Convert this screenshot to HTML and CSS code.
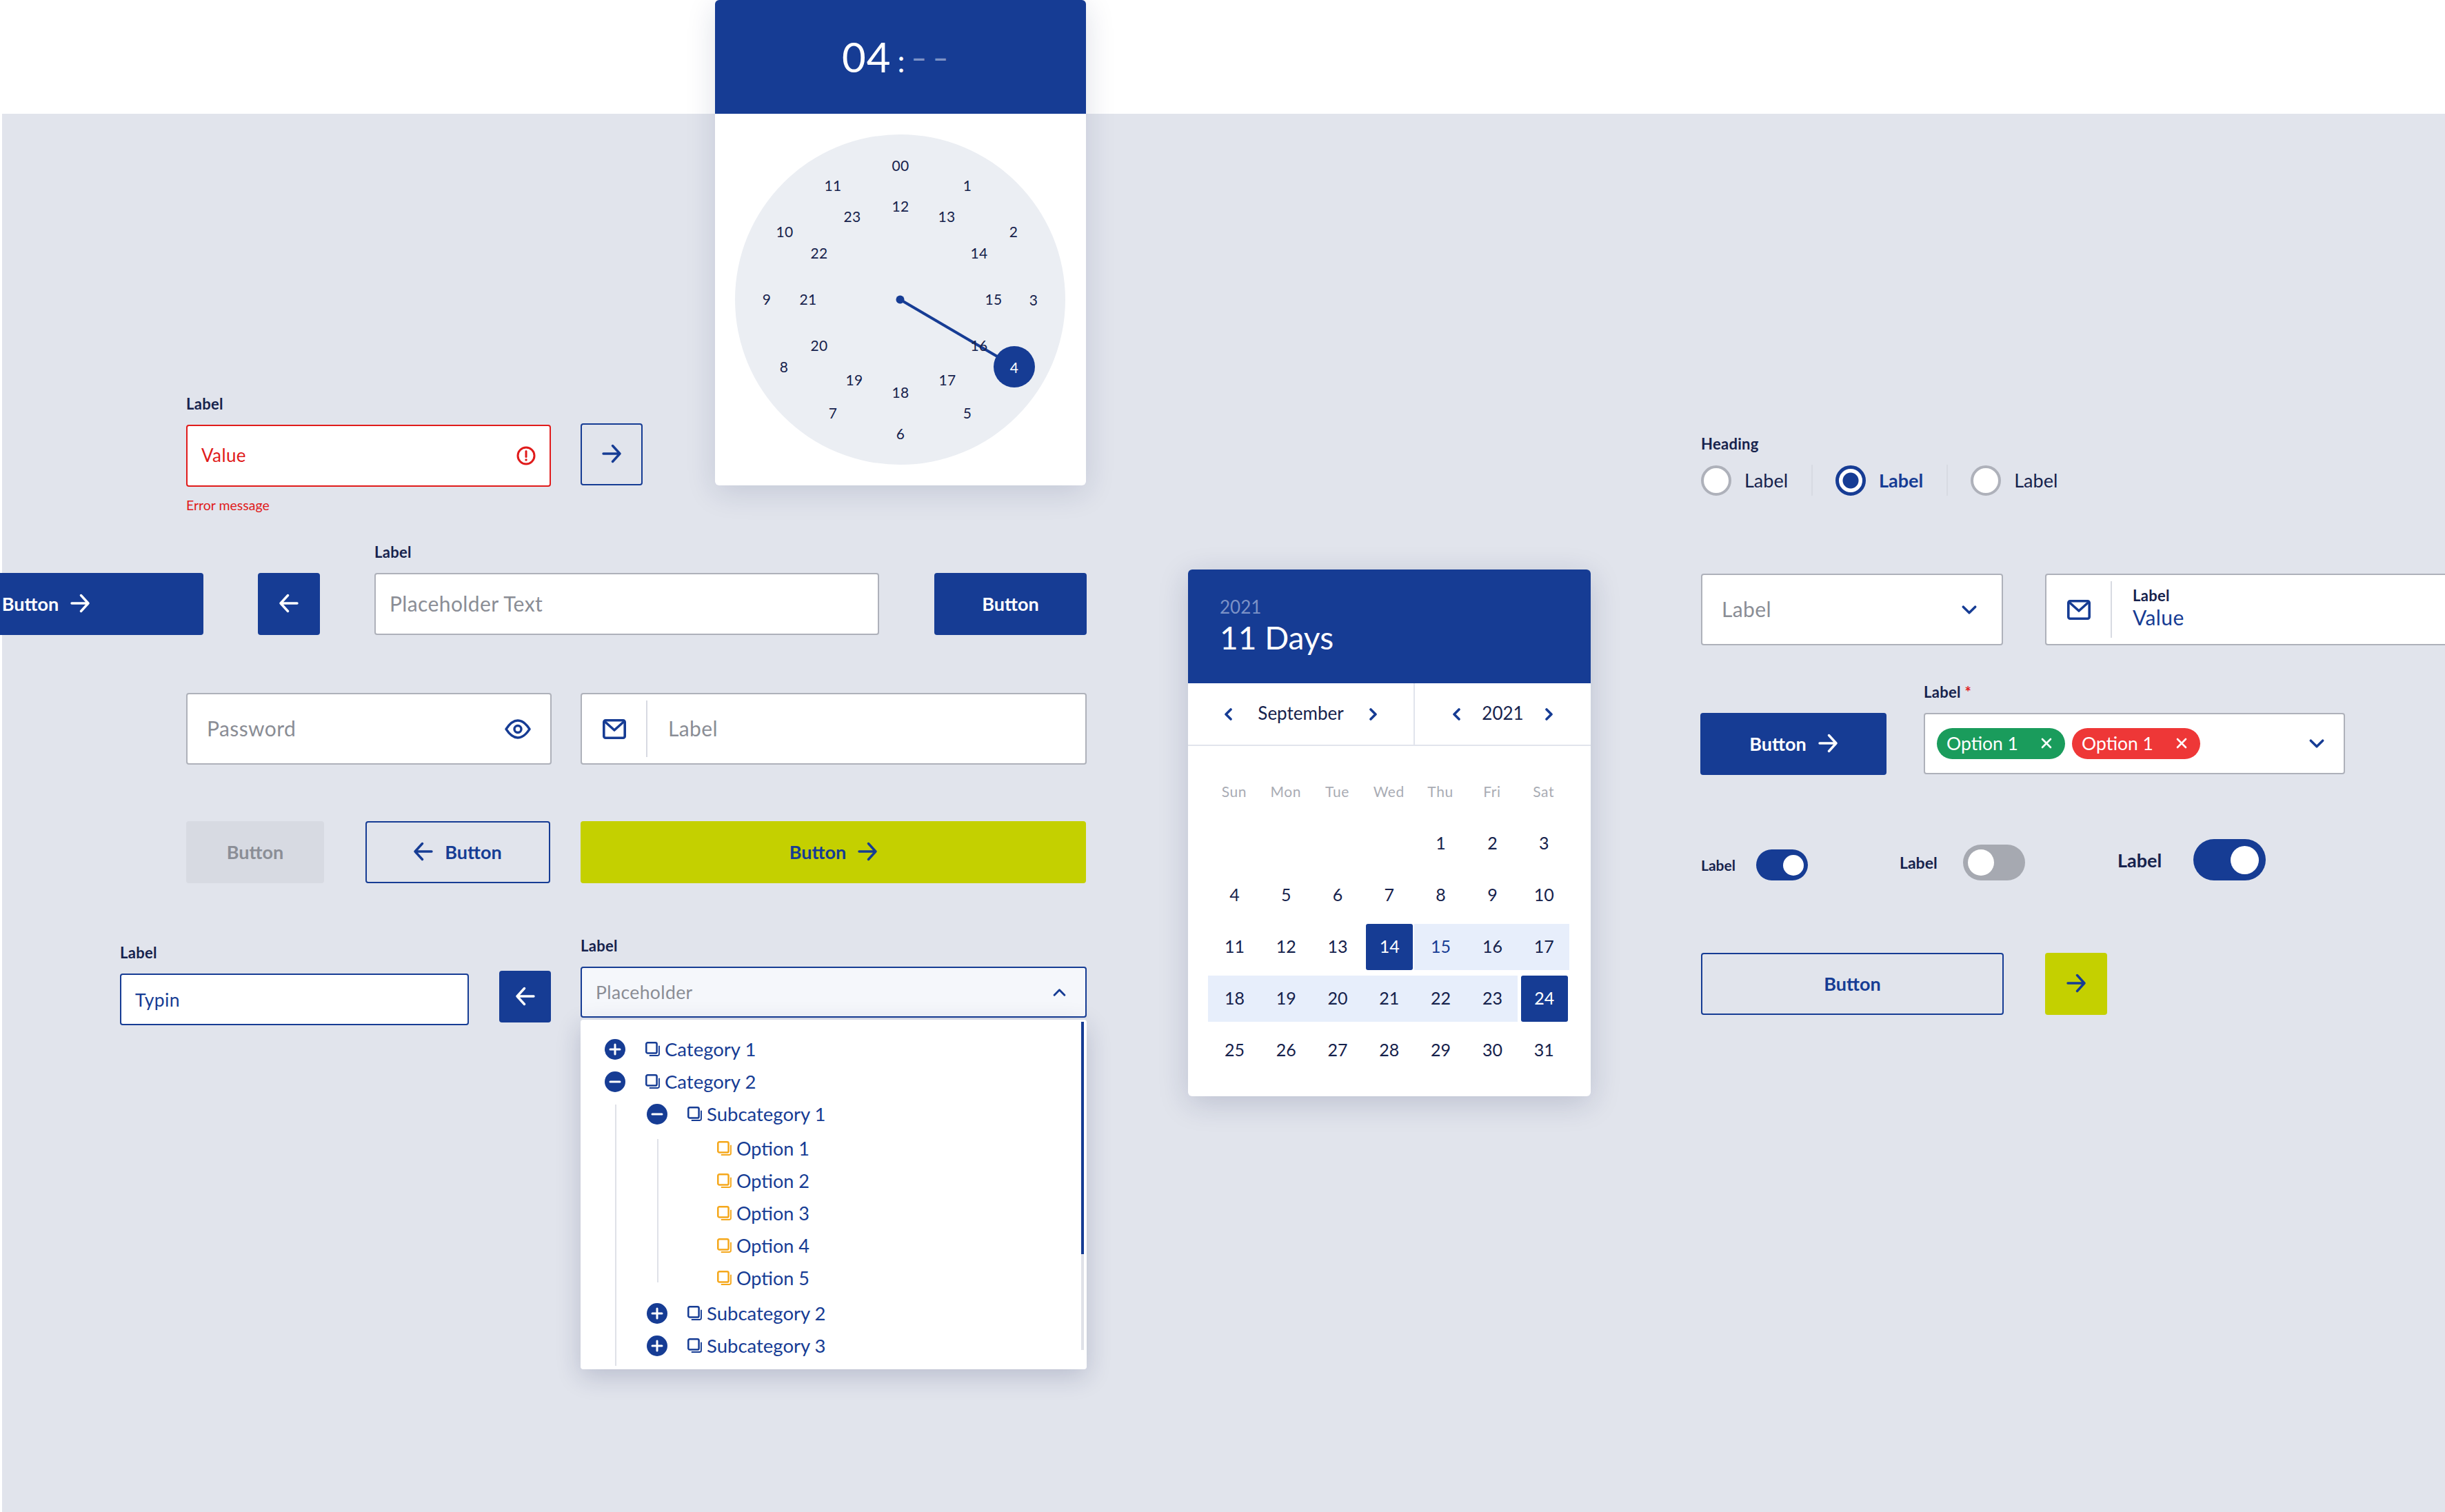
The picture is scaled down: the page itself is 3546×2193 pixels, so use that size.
FILE: index.html
```html
<!DOCTYPE html>
<html>
<head>
    <title>Form components</title>
    <link rel="stylesheet" href="styles.css">
</head>
<body>
    <!-- Shared icons -->
    <svg class="defs" width="0" height="0">
        <symbol id="arrow" viewBox="0 0 28 28"><path d="M2 14h24M15.500 2.500L26 14 15.500 25.500" fill="none" stroke="currentColor" stroke-width="3.400" stroke-linecap="round" stroke-linejoin="round"/></symbol>
        <symbol id="arrow-left" viewBox="0 0 28 28"><path d="M26 14H2M12.500 2.500L2 14l10.500 11.500" fill="none" stroke="currentColor" stroke-width="3.400" stroke-linecap="round" stroke-linejoin="round"/></symbol>
        <symbol id="mail" viewBox="0 0 34 29"><rect x="1.800" y="1.800" width="30.400" height="25.400" rx="2.500" fill="none" stroke="currentColor" stroke-width="3.600"/><path d="M2.500 3L17 16 31.500 3" fill="none" stroke="currentColor" stroke-width="3.600" stroke-linejoin="round"/></symbol>
        <symbol id="eye" viewBox="0 0 38 29"><path d="M2 14.500C7.500 6 13 2 19 2s11.500 4 17 12.500C30.500 23 25 27 19 27S7.500 23 2 14.500z" fill="none" stroke="currentColor" stroke-width="3.400" stroke-linejoin="round"/><circle cx="19" cy="14.500" r="5" fill="none" stroke="currentColor" stroke-width="3.400"/></symbol>
        <symbol id="alert" viewBox="0 0 28 28"><circle cx="14" cy="14" r="12" fill="none" stroke="currentColor" stroke-width="3"/><path d="M14 7.500v8" stroke="currentColor" stroke-width="3" stroke-linecap="round"/><circle cx="14" cy="20" r="1.700" fill="currentColor"/></symbol>
        <symbol id="chevron-down" viewBox="0 0 20 12"><path d="M2 2l8 8 8-8" fill="none" stroke="currentColor" stroke-width="3.200" stroke-linecap="round" stroke-linejoin="round"/></symbol>
        <symbol id="chevron-up" viewBox="0 0 20 12"><path d="M2 10l8-8 8 8" fill="none" stroke="currentColor" stroke-width="3.200" stroke-linecap="round" stroke-linejoin="round"/></symbol>
        <symbol id="chevron-left" viewBox="0 0 12 18"><path d="M10 2L3 9l7 7" fill="none" stroke="currentColor" stroke-width="3.600" stroke-linecap="round" stroke-linejoin="round"/></symbol>
        <symbol id="chevron-right" viewBox="0 0 12 18"><path d="M2 2l7 7-7 7" fill="none" stroke="currentColor" stroke-width="3.600" stroke-linecap="round" stroke-linejoin="round"/></symbol>
        <symbol id="close" viewBox="0 0 16 16"><path d="M2 2l12 12M14 2L2 14" stroke="currentColor" stroke-width="2.600" stroke-linecap="round"/></symbol>
        <symbol id="plus" viewBox="0 0 30 30"><circle cx="15" cy="15" r="15" fill="#163c94"/><path d="M15 8v14M8 15h14" stroke="#fff" stroke-width="3" stroke-linecap="round"/></symbol>
        <symbol id="minus" viewBox="0 0 30 30"><circle cx="15" cy="15" r="15" fill="#163c94"/><path d="M8 15h14" stroke="#fff" stroke-width="3" stroke-linecap="round"/></symbol>
        <symbol id="doc" viewBox="0 0 20 20"><rect x="1.200" y="1.200" width="14.600" height="14.600" rx="2" fill="#fff" stroke="currentColor" stroke-width="2.400"/><path d="M19 5.500V17a2 2 0 0 1-2 2H5.500" fill="none" stroke="currentColor" stroke-width="1.800"/></symbol>
    </svg>

    <div class="board">
        <div class="sheet"></div>

        <!-- Clock picker -->
        <div class="clock-card">
            <div class="clock-head">
                <span class="clock-hour">04</span>
                <span class="clock-colon">:</span>
                <span class="clock-minute">– –</span>
            </div>
            <div class="clock-body">
                <div class="dial">
                    <svg class="dial-hand" width="479" height="479"><line x1="239.500" y1="239.500" x2="405" y2="336.500" stroke="#163c94" stroke-width="4"/><circle cx="239.500" cy="239.500" r="6" fill="#163c94"/></svg>
                    <span class="dial-num" style="left:240px;top:45px">00</span>
                    <span class="dial-num" style="left:337px;top:74px">1</span>
                    <span class="dial-num" style="left:404px;top:141px">2</span>
                    <span class="dial-num" style="left:433px;top:240px">3</span>
                    <span class="dial-num dial-selected" style="left:405px;top:337px">4</span>
                    <span class="dial-num" style="left:337px;top:404px">5</span>
                    <span class="dial-num" style="left:240px;top:434px">6</span>
                    <span class="dial-num" style="left:142px;top:404px">7</span>
                    <span class="dial-num" style="left:71px;top:337px">8</span>
                    <span class="dial-num" style="left:46px;top:239px">9</span>
                    <span class="dial-num" style="left:72px;top:141px">10</span>
                    <span class="dial-num" style="left:142px;top:74px">11</span>
                    <span class="dial-num" style="left:240px;top:104px">12</span>
                    <span class="dial-num" style="left:307px;top:119px">13</span>
                    <span class="dial-num" style="left:354px;top:172px">14</span>
                    <span class="dial-num" style="left:375px;top:239px">15</span>
                    <span class="dial-num" style="left:354px;top:306px">16</span>
                    <span class="dial-num" style="left:308px;top:356px">17</span>
                    <span class="dial-num" style="left:240px;top:374px">18</span>
                    <span class="dial-num" style="left:173px;top:356px">19</span>
                    <span class="dial-num" style="left:122px;top:306px">20</span>
                    <span class="dial-num" style="left:106px;top:239px">21</span>
                    <span class="dial-num" style="left:122px;top:172px">22</span>
                    <span class="dial-num" style="left:170px;top:119px">23</span>
                </div>
            </div>
        </div>

        <!-- Left column -->
        <div class="field at-error">
            <label class="field-label">Label</label>
            <div class="input input-error">
                <span class="input-text">Value</span>
                <svg class="icon-alert"><use href="#alert"/></svg>
            </div>
            <span class="error-text">Error message</span>
        </div>
        <button class="btn btn-outline btn-square at-next"><svg class="icon-arrow"><use href="#arrow"/></svg></button>

        <button class="btn btn-blue at-clipped">Button <svg class="icon-arrow"><use href="#arrow"/></svg></button>
        <button class="btn btn-blue btn-square at-back"><svg class="icon-arrow"><use href="#arrow-left"/></svg></button>
        <div class="field at-text">
            <label class="field-label">Label</label>
            <div class="input"><span class="input-text placeholder">Placeholder Text</span></div>
        </div>
        <button class="btn btn-blue at-plain">Button</button>

        <div class="input input-tall at-password">
            <span class="input-text placeholder">Password</span>
            <svg class="icon-eye"><use href="#eye"/></svg>
        </div>
        <div class="input input-tall input-icon at-email">
            <span class="icon-cell"><svg class="icon-mail"><use href="#mail"/></svg></span>
            <span class="input-text placeholder">Label</span>
        </div>

        <button class="btn btn-disabled at-disabled">Button</button>
        <button class="btn btn-outline at-outline-back"><svg class="icon-arrow"><use href="#arrow-left"/></svg> Button</button>
        <button class="btn btn-lime at-lime">Button <svg class="icon-arrow"><use href="#arrow"/></svg></button>

        <div class="field at-typing">
            <label class="field-label">Label</label>
            <div class="input input-focus input-short"><span class="input-text input-small">Typin</span></div>
        </div>
        <button class="btn btn-blue btn-small at-back-small"><svg class="icon-arrow"><use href="#arrow-left"/></svg></button>

        <!-- Open tree select -->
        <div class="field at-tree">
            <label class="field-label">Label</label>
            <div class="input input-focus input-open">
                <span class="input-text input-small placeholder">Placeholder</span>
                <svg class="icon-chevron icon-chevron-small"><use href="#chevron-up"/></svg>
            </div>
            <div class="tree-panel">
                <div class="scroll-track"><div class="scroll-thumb"></div></div>
                <ul class="tree">
                    <li class="tree-row"><svg class="tree-toggle"><use href="#plus"/></svg><svg class="tree-doc"><use href="#doc"/></svg>Category 1</li>
                    <li class="tree-row"><svg class="tree-toggle"><use href="#minus"/></svg><svg class="tree-doc"><use href="#doc"/></svg>Category 2</li>
                    <li>
                        <ul class="tree-sub">
                            <li class="tree-row"><svg class="tree-toggle"><use href="#minus"/></svg><svg class="tree-doc"><use href="#doc"/></svg>Subcategory 1</li>
                            <li>
                                <ul class="tree-options">
                                    <li class="tree-row"><svg class="tree-doc doc-orange"><use href="#doc"/></svg>Option 1</li>
                                    <li class="tree-row"><svg class="tree-doc doc-orange"><use href="#doc"/></svg>Option 2</li>
                                    <li class="tree-row"><svg class="tree-doc doc-orange"><use href="#doc"/></svg>Option 3</li>
                                    <li class="tree-row"><svg class="tree-doc doc-orange"><use href="#doc"/></svg>Option 4</li>
                                    <li class="tree-row"><svg class="tree-doc doc-orange"><use href="#doc"/></svg>Option 5</li>
                                </ul>
                            </li>
                            <li class="tree-row"><svg class="tree-toggle"><use href="#plus"/></svg><svg class="tree-doc"><use href="#doc"/></svg>Subcategory 2</li>
                            <li class="tree-row"><svg class="tree-toggle"><use href="#plus"/></svg><svg class="tree-doc"><use href="#doc"/></svg>Subcategory 3</li>
                        </ul>
                    </li>
                </ul>
            </div>
        </div>

        <!-- Date range picker -->
        <div class="calendar">
            <div class="cal-head">
                <span class="cal-year">2021</span>
                <span class="cal-range">11 Days</span>
            </div>
            <div class="cal-nav">
                <div class="cal-nav-cell cal-nav-month">
                    <svg class="icon-nav"><use href="#chevron-left"/></svg>
                    <span class="cal-nav-text">September</span>
                    <svg class="icon-nav"><use href="#chevron-right"/></svg>
                </div>
                <div class="cal-nav-cell cal-nav-year">
                    <svg class="icon-nav"><use href="#chevron-left"/></svg>
                    <span class="cal-nav-text">2021</span>
                    <svg class="icon-nav"><use href="#chevron-right"/></svg>
                </div>
            </div>
            <div class="cal-grid">
                <span class="cal-week">Sun</span><span class="cal-week">Mon</span><span class="cal-week">Tue</span><span class="cal-week">Wed</span><span class="cal-week">Thu</span><span class="cal-week">Fri</span><span class="cal-week">Sat</span>
                <span class="cal-day"></span><span class="cal-day"></span><span class="cal-day"></span><span class="cal-day"></span><span class="cal-day">1</span><span class="cal-day">2</span><span class="cal-day">3</span>
                <span class="cal-day">4</span><span class="cal-day">5</span><span class="cal-day">6</span><span class="cal-day">7</span><span class="cal-day">8</span><span class="cal-day">9</span><span class="cal-day">10</span>
                <span class="cal-day">11</span><span class="cal-day">12</span><span class="cal-day">13</span><span class="cal-day day-edge">14</span><span class="cal-day day-band day-hover">15</span><span class="cal-day day-band">16</span><span class="cal-day day-band">17</span>
                <span class="cal-day day-band">18</span><span class="cal-day day-band">19</span><span class="cal-day day-band">20</span><span class="cal-day day-band">21</span><span class="cal-day day-band">22</span><span class="cal-day day-band">23</span><span class="cal-day day-edge">24</span>
                <span class="cal-day">25</span><span class="cal-day">26</span><span class="cal-day">27</span><span class="cal-day">28</span><span class="cal-day">29</span><span class="cal-day">30</span><span class="cal-day">31</span>
            </div>
        </div>

        <!-- Right column -->
        <div class="radio-group at-radios">
            <label class="field-label">Heading</label>
            <div class="radio-row">
                <span class="radio"><span class="radio-dot"></span>Label</span>
                <span class="radio radio-on"><span class="radio-dot"></span>Label</span>
                <span class="radio"><span class="radio-dot"></span>Label</span>
            </div>
        </div>

        <div class="input input-tall at-select">
            <span class="input-text placeholder">Label</span>
            <svg class="icon-chevron"><use href="#chevron-down"/></svg>
        </div>
        <div class="input input-tall input-icon at-value">
            <span class="icon-cell"><svg class="icon-mail"><use href="#mail"/></svg></span>
            <div class="stacked">
                <span class="field-label">Label</span>
                <span class="input-text stacked-value">Value</span>
            </div>
        </div>

        <button class="btn btn-blue at-right-btn">Button <svg class="icon-arrow"><use href="#arrow"/></svg></button>
        <div class="field at-multi">
            <label class="field-label">Label <span class="required">*</span></label>
            <div class="input input-chips">
                <span class="chip chip-green">Option 1 <svg class="icon-close"><use href="#close"/></svg></span>
                <span class="chip chip-red">Option 1 <svg class="icon-close"><use href="#close"/></svg></span>
                <svg class="icon-chevron"><use href="#chevron-down"/></svg>
            </div>
        </div>

        <div class="toggle-item at-toggle-s"><span class="toggle-label">Label</span><span class="toggle toggle-s"><span class="toggle-knob"></span></span></div>
        <div class="toggle-item at-toggle-m"><span class="toggle-label">Label</span><span class="toggle toggle-m"><span class="toggle-knob"></span></span></div>
        <div class="toggle-item at-toggle-l"><span class="toggle-label">Label</span><span class="toggle toggle-l"><span class="toggle-knob"></span></span></div>

        <button class="btn btn-outline at-wide-outline">Button</button>
        <button class="btn btn-lime btn-square at-lime-square"><svg class="icon-arrow"><use href="#arrow"/></svg></button>
    </div>
</body>
</html>
```

FILE: styles.css
```css
/* Reset */
* {
    margin: 0;
    padding: 0;
    box-sizing: border-box;
}

body {
    background-color: #fff;
    font-family: Lato, "Open Sans", sans-serif;
    color: #16224c;
    overflow: hidden;
}

ul {
    list-style: none;
}

.defs {
    position: absolute;
}

/* The board: components lie where the designer dropped them */
.board {
    position: relative;
    width: 3546px;
    height: 2193px;
    overflow: hidden;
}

.board > * {
    position: absolute;
}

.sheet {
    left: 3px;
    right: 0;
    top: 165px;
    bottom: 0;
    background-color: #e1e4ec;
}

/* Board positions */
.at-error { left: 270px; top: 572px; }
.at-next { left: 842px; top: 614px; }
.at-clipped { left: -162px; top: 831px; width: 457px; }
.at-back { left: 374px; top: 831px; }
.at-text { left: 543px; top: 787px; width: 732px; }
.at-plain { left: 1355px; top: 831px; width: 221px; }
.at-password { left: 270px; top: 1005px; width: 530px; }
.at-email { left: 842px; top: 1005px; width: 734px; }
.at-disabled { left: 270px; top: 1191px; width: 200px; }
.at-outline-back { left: 530px; top: 1191px; width: 268px; }
.at-lime { left: 842px; top: 1191px; width: 733px; }
.at-typing { left: 174px; top: 1368px; width: 506px; }
.at-back-small { left: 724px; top: 1408px; }
.at-tree { left: 842px; top: 1358px; width: 734px; }
.at-radios { left: 2467px; top: 630px; }
.at-select { left: 2467px; top: 832px; width: 438px; }
.at-value { left: 2966px; top: 832px; width: 700px; }
.at-right-btn { left: 2466px; top: 1034px; width: 270px; }
.at-multi { left: 2790px; top: 990px; width: 611px; }
.at-toggle-s { left: 2467px; top: 1232px; }
.at-toggle-m { left: 2755px; top: 1225px; }
.at-toggle-l { left: 3071px; top: 1217px; }
.at-wide-outline { left: 2467px; top: 1382px; width: 439px; }
.at-lime-square { left: 2966px; top: 1382px; }

/* Labels */
.field {
    display: flex;
    flex-direction: column;
}

.field-label {
    font-size: 22px;
    font-weight: 700;
    line-height: 28px;
    letter-spacing: 0.3px;
    color: #16224c;
}

.field > .field-label {
    margin-bottom: 16px;
}

.required {
    color: #e01b1b;
}

.error-text {
    margin-top: 16px;
    font-size: 19.500px;
    line-height: 22px;
    color: #e01b1b;
}

/* Inputs */
.input {
    display: flex;
    align-items: center;
    justify-content: space-between;
    height: 90px;
    padding: 0 20px;
    background-color: #fff;
    border: 2px solid #aeb1ba;
    border-radius: 4px;
}

.input-tall {
    height: 104px;
    padding: 0 28px;
}

.input-short {
    height: 75px;
}

.input-text {
    padding-bottom: 3px;
    font-size: 30px;
    letter-spacing: 0.4px;
}

.input-small {
    padding-bottom: 0;
    font-size: 26.500px;
    color: #163c94;
}

.placeholder {
    color: #8a8d95;
}

.input-error {
    width: 529px;
    border-color: #e01b1b;
}

.input-error .input-text {
    padding-bottom: 2px;
    font-size: 26px;
    color: #e01b1b;
}

.input-focus {
    border-color: #163c94;
}

.input-open {
    height: 74px;
    background-color: #f5f7fb;
}

.input-icon {
    justify-content: flex-start;
    padding: 0;
}

.icon-cell {
    display: flex;
    align-items: center;
    justify-content: center;
    width: 95px;
    height: 82px;
    margin-right: 30px;
    color: #163c94;
    border-right: 2px solid #d7dae2;
}

.stacked {
    display: flex;
    flex-direction: column;
    padding-bottom: 6px;
}

.stacked-value {
    padding-bottom: 0;
    line-height: 34px;
    color: #163c94;
}

.input-chips {
    height: 89px;
    padding: 0 28px 0 17px;
    justify-content: flex-start;
    gap: 10px;
}

.input-chips .icon-chevron {
    margin-left: auto;
    margin-right: 0;
}

.chip {
    display: flex;
    align-items: center;
    justify-content: space-between;
    width: 186px;
    height: 45px;
    padding: 0 19px 2px 14px;
    border-radius: 23px;
    font-size: 26.500px;
    color: #fff;
}

.chip-green {
    background-color: #1a9c5c;
}

.chip-red {
    background-color: #ee3737;
}

/* Icons */
.icon-arrow {
    width: 28px;
    height: 28px;
}

.icon-mail {
    width: 34px;
    height: 29px;
    color: #163c94;
}

.icon-eye {
    width: 38px;
    height: 29px;
    color: #163c94;
}

.icon-alert {
    width: 28px;
    height: 28px;
    color: #e01b1b;
}

.icon-chevron {
    width: 22px;
    height: 13px;
    margin-right: 8px;
    color: #163c94;
}

.icon-chevron-small {
    width: 19px;
    height: 11px;
}

.icon-close {
    width: 16px;
    height: 16px;
}

.icon-nav {
    width: 12px;
    height: 18px;
    color: #163c94;
}

/* Buttons */
.btn {
    display: flex;
    align-items: center;
    justify-content: center;
    gap: 17px;
    height: 90px;
    padding-bottom: 2px;
    border: 2px solid transparent;
    border-radius: 4px;
    font-family: inherit;
    font-size: 27px;
    font-weight: 700;
    background: none;
}

.btn-square {
    width: 90px;
}

.btn-small {
    width: 75px;
    height: 75px;
}

.btn-blue {
    background-color: #163c94;
    color: #fff;
}

.btn-lime {
    background-color: #c4d000;
    color: #163c94;
}

.btn-outline {
    border-color: #163c94;
    color: #163c94;
}

.btn-disabled {
    background-color: #d7dae2;
    color: #8b8e96;
}

/* Clock picker */
.clock-card {
    left: 1037px;
    top: 0;
    width: 538px;
    height: 704px;
    background-color: #fff;
    border-radius: 6px;
    box-shadow: 0 10px 44px rgba(24, 36, 84, 0.14);
}

.clock-head {
    display: flex;
    align-items: baseline;
    height: 165px;
    padding: 46px 0 0 184px;
    background-color: #163c94;
    border-radius: 6px 6px 0 0;
    color: #fff;
}

.clock-hour {
    font-size: 60px;
    letter-spacing: 1px;
}

.clock-colon {
    margin: 0 9px 0 9px;
    font-size: 44px;
}

.clock-minute {
    position: relative;
    top: -7px;
    font-size: 38px;
    font-weight: 700;
    color: #7d92c6;
}

.clock-body {
    padding: 30px 29px;
}

.dial {
    position: relative;
    width: 479px;
    height: 479px;
    background-color: #ebeef3;
    border-radius: 50%;
}

.dial-hand {
    position: absolute;
    left: 0;
    top: 0;
}

.dial-num {
    position: absolute;
    transform: translate(-50%, calc(-50% - 1px));
    font-size: 21px;
    letter-spacing: 0.4px;
}

.dial-selected {
    display: flex;
    align-items: center;
    justify-content: center;
    width: 60px;
    height: 60px;
    transform: translate(-50%, -50%);
    background-color: #163c94;
    border-radius: 50%;
    color: #fff;
}

/* Tree select */
.tree-panel {
    position: relative;
    height: 507px;
    margin-top: 3px;
    padding: 19px 0 0 35px;
    background-color: #fff;
    border-radius: 4px;
    box-shadow: 0 10px 36px rgba(24, 36, 84, 0.2);
    font-size: 27.500px;
    color: #163c94;
}

.scroll-track {
    position: absolute;
    right: 4px;
    top: 3px;
    width: 4px;
    height: 476px;
    background-color: #dfe1e8;
}

.scroll-thumb {
    height: 337px;
    background-color: #163c94;
}

.tree-row {
    display: flex;
    align-items: center;
    height: 47px;
}

.tree-toggle {
    width: 30px;
    height: 30px;
    margin-right: 29px;
}

.tree-doc {
    width: 21px;
    height: 21px;
    margin-right: 7px;
    color: #163c94;
}

.doc-orange {
    color: #f5a81c;
}

.tree-sub {
    position: relative;
    margin-left: 15px;
    padding-left: 46px;
}

.tree-sub::before {
    content: "";
    position: absolute;
    left: 0;
    top: 10px;
    bottom: -6px;
    width: 2px;
    background-color: #dfe1e8;
}

.tree-options {
    position: relative;
    margin: 3px 0 4px 15px;
    padding-left: 87px;
    font-size: 27px;
}

.tree-options::before {
    content: "";
    position: absolute;
    left: 0;
    top: 10px;
    bottom: 17px;
    width: 2px;
    background-color: #dfe1e8;
}

/* Date range picker */
.calendar {
    left: 1723px;
    top: 826px;
    width: 584px;
    height: 764px;
    background-color: #fff;
    border-radius: 6px;
    box-shadow: 0 10px 44px rgba(24, 36, 84, 0.18);
}

.cal-head {
    display: flex;
    flex-direction: column;
    height: 165px;
    padding: 38px 0 0 46px;
    background-color: #163c94;
    border-radius: 6px 6px 0 0;
}

.cal-year {
    font-size: 26px;
    line-height: 32px;
    color: #7c92c7;
}

.cal-range {
    margin-top: 1px;
    font-size: 46px;
    line-height: 56px;
    color: #fff;
}

.cal-nav {
    display: grid;
    grid-template-columns: 329px 1fr;
    height: 91px;
    border-bottom: 2px solid #e1e4ec;
    font-size: 26px;
}

.cal-nav-cell {
    display: flex;
    align-items: center;
    justify-content: center;
}

.cal-nav-text {
    padding-bottom: 3px;
}

.cal-nav-month {
    gap: 37px;
    border-right: 2px solid #e1e4ec;
}

.cal-nav-year {
    gap: 31px;
}

.cal-grid {
    display: grid;
    grid-template-columns: repeat(7, 74.800px);
    grid-auto-rows: 67px;
    row-gap: 8px;
    padding: 33px 0 0 29px;
    font-size: 25px;
}

.cal-week,
.cal-day {
    display: flex;
    align-items: center;
    justify-content: center;
    padding-bottom: 3px;
}

.cal-week {
    padding-left: 1px;
    font-size: 21px;
    letter-spacing: 0.6px;
    color: #a9acb4;
}

.cal-day {
    padding-left: 2px;
}

.day-band {
    background-color: #e7eefb;
}

.day-hover {
    color: #163c94;
}

.day-edge {
    margin: 0 2px 0 5px;
    padding-left: 0;
    background-color: #163c94;
    border-radius: 3px;
    color: #fff;
}

/* Radios */
.radio-group {
    display: flex;
    flex-direction: column;
    gap: 16px;
}

.radio-row {
    display: flex;
}

.radio {
    display: flex;
    align-items: center;
    gap: 19px;
    height: 45px;
    padding-right: 34px;
    margin-right: 33px;
    border-right: 2px solid #d7dae2;
    font-size: 27px;
}

.radio:last-child {
    border-right: none;
}

.radio-dot {
    width: 44px;
    height: 44px;
    background-color: #fff;
    border: 4px solid #aeb1ba;
    border-radius: 50%;
}

.radio-on {
    font-weight: 700;
    color: #163c94;
}

.radio-on .radio-dot {
    border: 5px solid #163c94;
    background: radial-gradient(circle, #163c94 11px, #fff 12px);
}

/* Toggles */
.toggle-item {
    display: flex;
    align-items: center;
}

.toggle-label {
    font-weight: 700;
}

.toggle {
    display: flex;
    align-items: center;
    border-radius: 40px;
    background-color: #163c94;
}

.toggle-knob {
    background-color: #fff;
    border-radius: 50%;
}

.at-toggle-s .toggle-label {
    font-size: 21px;
    margin-right: 30px;
}

.toggle-s {
    justify-content: flex-end;
    width: 75px;
    height: 45px;
    padding-right: 6px;
}

.toggle-s .toggle-knob {
    width: 30px;
    height: 30px;
}

.at-toggle-m .toggle-label {
    font-size: 23px;
    margin-right: 37px;
}

.toggle-m {
    width: 90px;
    height: 52px;
    padding-left: 7px;
    background-color: #a6a9b1;
}

.toggle-m .toggle-knob {
    width: 38px;
    height: 38px;
}

.at-toggle-l .toggle-label {
    font-size: 27px;
    margin-right: 46px;
}

.toggle-l {
    justify-content: flex-end;
    width: 105px;
    height: 60px;
    padding-right: 10px;
}

.toggle-l .toggle-knob {
    width: 41px;
    height: 41px;
}
```
